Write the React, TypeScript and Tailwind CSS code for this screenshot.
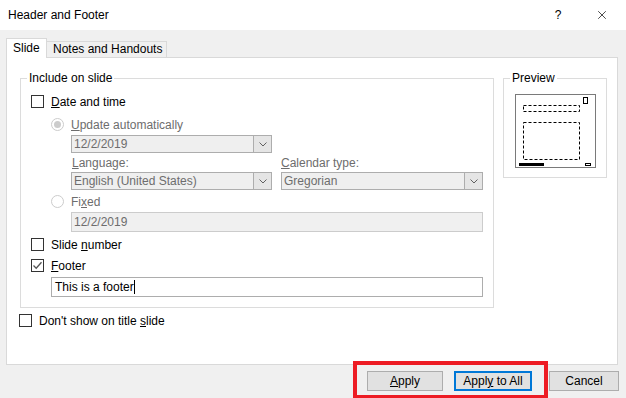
import { X } from "lucide-react";

function Box({ checked }: { checked?: boolean }) {
  return (
    <span className="w-[13px] h-[13px] border border-[#333333] bg-white flex items-center justify-center shrink-0">
      {checked && (
        <svg width="11" height="11" viewBox="0 0 11 11">
          <path d="M1.5 5.5 L4.2 8.2 L9.5 2.2" fill="none" stroke="#555555" strokeWidth="1.3" />
        </svg>
      )}
    </span>
  );
}

function Radio({ on }: { on?: boolean }) {
  return (
    <span className="w-[13px] h-[13px] rounded-full border border-[#cccccc] bg-white flex items-center justify-center shrink-0">
      {on && <span className="w-[7px] h-[7px] rounded-full bg-[#cccccc]" />}
    </span>
  );
}

function Combo({ value, w }: { value: string; w: string }) {
  return (
    <div className={`${w} h-[18px] border border-[#adadad] bg-[#efefef] flex`}>
      <span className="flex-1 pl-[2px] leading-[16px] text-[#6d6d6d]">{value}</span>
      <span className="w-[18px] border-l border-[#adadad] bg-[#e5e5e5] flex items-center justify-center">
        <svg width="8" height="5" viewBox="0 0 8 5">
          <path d="M0.5 0.5 L4 4 L7.5 0.5" fill="none" stroke="#606060" strokeWidth="1" />
        </svg>
      </span>
    </div>
  );
}

function Preview() {
  return (
    <svg width="81" height="74" viewBox="0 0 81 74" className="ml-[11px] mt-[15px]">
      <rect x="0.5" y="0.5" width="80" height="73" fill="white" stroke="#7a7a7a" />
      <rect x="68.5" y="3.5" width="4" height="6" fill="none" stroke="black" />
      <rect x="8.5" y="11.5" width="56" height="6" fill="none" stroke="black" strokeDasharray="3 2" />
      <rect x="8.5" y="28.5" width="56" height="37" fill="none" stroke="black" strokeDasharray="3 2" />
      <rect x="4" y="69" width="25" height="3" fill="black" />
      <rect x="70.5" y="69.5" width="5" height="2" fill="none" stroke="black" />
    </svg>
  );
}

export default function App() {
  return (
    <div className="relative w-[626px] h-[398px] bg-[#f0f0f0] overflow-hidden text-[12px] text-black font-['Liberation_Sans',Arial,sans-serif]">
      {/* title bar */}
      <div className="h-[30px] bg-white flex items-center pl-[8px]">
        <span className="flex-1">Header and Footer</span>
        <span className="w-[20px] text-center mr-[27px]">?</span>
        <X className="w-[14px] h-[14px] mr-[17px]" strokeWidth={1.2} />
      </div>

      {/* tabs */}
      <div className="h-[27px] flex items-end pl-[6px]">
        <div className="relative z-10 -mb-px h-[20px] w-[41px] bg-white border border-b-0 border-[#d9d9d9] pl-[6px] leading-[18px]">
          Slide
        </div>
        <div className="h-[16px] w-[120px] border border-b-0 border-l-0 border-[#d9d9d9] pl-[6px] leading-[15px]">
          Notes and Handouts
        </div>
      </div>

      {/* panel */}
      <div className="ml-[6px] w-[612px] h-[308px] border border-[#d9d9d9] bg-white">
        <div className="flex mt-[20px]">
          <div className="ml-[13px] w-[474px] h-[230px] border border-[#dcdcdc] relative pl-[10px]">
            <span className="absolute -top-[9px] left-[6px] px-[2px] bg-white leading-[16px]">Include on slide</span>

            <div className="mt-[13px] h-[19px] flex items-center gap-[7px]">
              <Box />
              <span><u>D</u>ate and time</span>
            </div>

            <div className="ml-[20px]">
              <div className="mt-[4px] h-[19px] flex items-center gap-[7px] text-[#6d6d6d]">
                <Radio on />
                <span><u>U</u>pdate automatically</span>
              </div>
              <div className="ml-[20px]">
                <div className="mt-px">
                  <Combo value="12/2/2019" w="w-[201px]" />
                </div>
                <div className="mt-[2px] h-[16px] flex items-center text-[#6d6d6d]">
                  <span className="w-[210px] pl-px"><u>L</u>anguage:</span>
                  <span><u>C</u>alendar type:</span>
                </div>
                <div className="mt-px flex gap-[9px]">
                  <Combo value="English (United States)" w="w-[201px]" />
                  <Combo value="Gregorian" w="w-[202px]" />
                </div>
              </div>
              <div className="mt-[2px] h-[19px] flex items-center gap-[7px] text-[#6d6d6d]">
                <Radio />
                <span>Fi<u>x</u>ed</span>
              </div>
              <div className="ml-[20px] mt-px w-[412px] h-[20px] border border-[#cccccc] bg-[#f0f0f0] pl-[2px] leading-[18px] text-[#6d6d6d]">
                12/2/2019
              </div>
            </div>

            <div className="mt-[3px] h-[19px] flex items-center gap-[7px]">
              <Box />
              <span>Slide <u>n</u>umber</span>
            </div>
            <div className="mt-[2px] h-[19px] flex items-center gap-[7px]">
              <Box checked />
              <span><u>F</u>ooter</span>
            </div>
            <div className="ml-[20px] mt-[2px] w-[432px] h-[20px] border border-[#adadad] bg-white pl-[3px] leading-[18px] flex items-center">
              <span>This is a footer</span>
              <span className="w-px h-[14px] bg-black" />
            </div>
          </div>

          <div className="ml-[9px] w-[104px] h-[100px] border border-[#dcdcdc] relative">
            <span className="absolute -top-[9px] left-[6px] px-[2px] bg-white leading-[16px]">Preview</span>
            <Preview />
          </div>
        </div>

        <div className="ml-[12px] mt-[3px] h-[19px] flex items-center gap-[7px]">
          <Box />
          <span>Don't show on title <u>s</u>lide</span>
        </div>
      </div>

      {/* buttons */}
      <div className="mt-[6px] flex">
        <button className="ml-[367px] w-[76px] h-[20px] bg-[#e1e1e1] border border-[#adadad] leading-[18px]">
          <u>A</u>pply
        </button>
        <button className="ml-[11px] w-[78px] h-[20px] bg-[#e1e1e1] border-2 border-[#0078d7] leading-[16px]">
          Appl<u>y</u> to All
        </button>
        <button className="ml-[17px] w-[70px] h-[20px] bg-[#e1e1e1] border border-[#adadad] leading-[18px]">
          Cancel
        </button>
      </div>

      {/* annotation */}
      <div className="absolute left-[353px] top-[361px] w-[195px] h-[38px] border-4 border-[#ed1c24]" />
    </div>
  );
}
